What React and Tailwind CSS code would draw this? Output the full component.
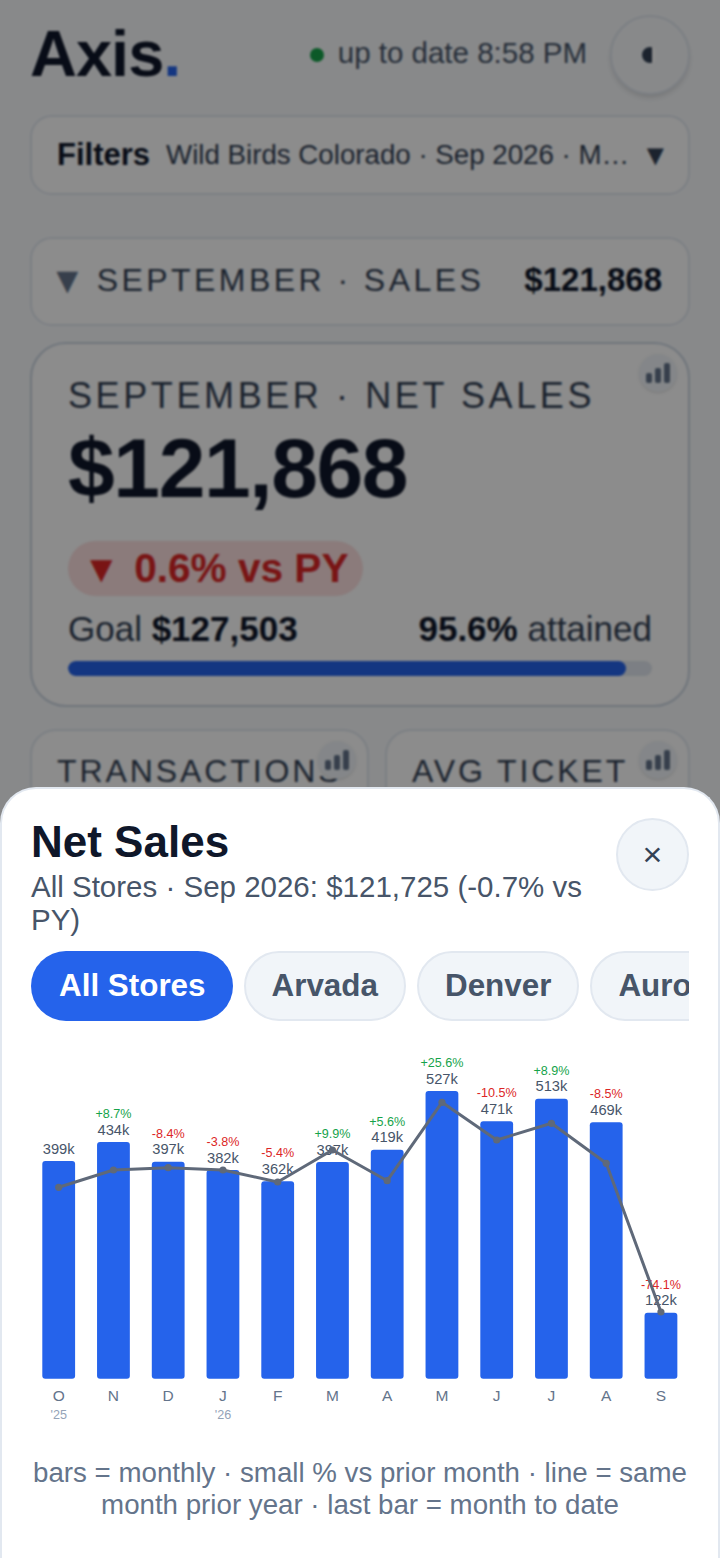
import React from 'react';

const months = [
    { m: 'O', v: '399k', top: 1161, line: 1187.3, year: "'25" },
    { m: 'N', v: '434k', top: 1142, line: 1170, pct: '+8.7%' },
    { m: 'D', v: '397k', top: 1161.7, line: 1167.7, pct: '-8.4%' },
    { m: 'J', v: '382k', top: 1170, line: 1170, pct: '-3.8%', year: "'26" },
    { m: 'F', v: '362k', top: 1181.3, line: 1182, pct: '-5.4%' },
    { m: 'M', v: '397k', top: 1162, line: 1150, pct: '+9.9%' },
    { m: 'A', v: '419k', top: 1149.7, line: 1180.7, pct: '+5.6%' },
    { m: 'M', v: '527k', top: 1091, line: 1102.3, pct: '+25.6%' },
    { m: 'J', v: '471k', top: 1121.3, line: 1140, pct: '-10.5%' },
    { m: 'J', v: '513k', top: 1098.7, line: 1123.3, pct: '+8.9%' },
    { m: 'A', v: '469k', top: 1122.3, line: 1163.3, pct: '-8.5%' },
    { m: 'S', v: '122k', top: 1312.7, line: 1312, pct: '-74.1%' },
];

const stores = ['All Stores', 'Arvada', 'Denver', 'Aurora'];

function ChartBadge() {
    return (
        <div className="absolute right-[11px] top-[10px] flex h-[38px] w-[38px] items-center justify-center rounded-full bg-[#f1f5f9] shadow-sm">
            <svg width="26" height="22" viewBox="0 0 26 22">
                <rect x="1" y="11" width="6" height="10" rx="2" fill="#64748b" />
                <rect x="10" y="6" width="6" height="15" rx="2" fill="#64748b" />
                <rect x="19" y="1" width="6" height="20" rx="2" fill="#64748b" />
            </svg>
        </div>
    );
}

function BarChart() {
    const cx = (i) => 58.7 + 54.75 * i;
    const points = months.map((d, i) => `${cx(i)},${d.line}`).join(' ');
    return (
        <svg className="mt-[29px] block h-[380px] w-[658px]" viewBox="31 1050 658 380">
            {months.map((d, i) => (
                <g key={i} textAnchor="middle">
                    <rect x={cx(i) - 16.4} y={d.top} width="32.8" height={1378.7 - d.top} rx="3" fill="#2563eb" />
                    <text x={cx(i)} y={d.top - 7.5} fontSize="14.7" fill="#475569">{d.v}</text>
                    {d.pct && (
                        <text x={cx(i)} y={d.top - 24} fontSize="12.6" fill={d.pct[0] === '+' ? '#16a34a' : '#dc2626'}>{d.pct}</text>
                    )}
                    <text x={cx(i)} y="1401" fontSize="15.5" fill="#64748b">{d.m}</text>
                    {d.year && <text x={cx(i)} y="1419" fontSize="12.6" fill="#94a3b8">{d.year}</text>}
                </g>
            ))}
            <polyline points={points} fill="none" stroke="#5f6979" strokeWidth="3" strokeLinejoin="round" />
            {months.map((d, i) => (
                <circle key={i} cx={cx(i)} cy={d.line} r="3.6" fill="#5f6979" />
            ))}
        </svg>
    );
}

function App() {
    return (
        <div className="relative h-[1558px] w-[720px] overflow-hidden bg-[#f8fafc] px-[30px] font-['Liberation_Sans',Arial,sans-serif] text-[#0f172a]">
            {/* page behind the sheet */}
            <header className="mt-[15px] flex h-[80px] items-center justify-between">
                <h1 className="pb-[4px] text-[65px] font-bold leading-none tracking-[-1px]">
                    Axis<span className="text-[#2563eb]">.</span>
                </h1>
                <div className="flex items-center">
                    <span className="mr-[14px] h-[14px] w-[14px] rounded-full bg-[#16a34a]" />
                    <span className="pb-[4px] text-[29.5px] text-[#475569]">up to date 8:58 PM</span>
                    <button className="ml-[23px] flex h-[80px] w-[80px] items-center justify-center rounded-full border-2 border-[#e2e8f0] bg-[#f8fafc] shadow-md">
                        <span className="mr-[2px] h-[16px] w-[14px] overflow-hidden">
                            <span className="block h-[16px] w-[16px] rounded-full bg-[linear-gradient(90deg,#334155_60%,#ffffff_60%)]" />
                        </span>
                    </button>
                </div>
            </header>

            <div className="mt-[20px] flex h-[80px] items-center rounded-[22px] border-2 border-[#e2e8f0] bg-white pl-[25px] pr-[14px]">
                <span className="text-[31px] font-bold">Filters</span>
                <span className="ml-[16px] w-[465px] truncate text-[27.7px] text-[#334155]">Wild Birds Colorado · Sep 2026 · Month to date</span>
                <span className="ml-[10px] shrink-0 text-[29px] leading-none text-[#334155]">▼</span>
            </div>

            <div className="mt-[42px] flex h-[89px] items-center justify-between rounded-[22px] border-2 border-[#e2e8f0] bg-white pb-[3px] pl-[17px] pr-[26px]">
                <div className="flex items-center">
                    <span className="text-[37px] leading-none text-[#64748b]">▼</span>
                    <span className="ml-[11px] text-[32px] tracking-[3.45px] text-[#334155]">SEPTEMBER · SALES</span>
                </div>
                <span className="text-[33px] font-bold">$121,868</span>
            </div>

            <section className="relative mt-[16px] h-[365px] rounded-[36px] border-2 border-[#cbd5e1] bg-white px-[36px] pt-[31px]">
                <ChartBadge />
                <div className="text-[36px] leading-[42px] tracking-[3.6px] text-[#334155]">SEPTEMBER · NET SALES</div>
                <div className="mt-[5px] text-[84px] font-bold leading-[92px] tracking-[-1.4px]">$121,868</div>
                <div className="mt-[27px] flex h-[55px] w-[295px] items-center justify-center rounded-full bg-[#fde0e0] text-[40.6px] font-bold text-[#dc2626]">
                    <span className="mr-[14px] text-[38px] leading-none">▼</span>0.6% vs PY
                </div>
                <div className="mt-[13px] flex justify-between text-[35px] leading-[40px] text-[#334155]">
                    <span>Goal <b className="text-[#0f172a]">$127,503</b></span>
                    <span><b className="text-[#0f172a]">95.6%</b> attained</span>
                </div>
                <div className="mt-[12px] h-[15px] overflow-hidden rounded-full bg-[#e2e8f0]">
                    <div className="h-full w-[95.6%] rounded-full bg-[#2563eb]" />
                </div>
            </section>

            <div className="mt-[22px] flex gap-[16px]">
                <div className="relative h-[200px] w-[339px] rounded-[26px] border-2 border-[#e2e8f0] bg-white pl-[25px] pt-[16px]">
                    <div className="text-[32px] tracking-[2.9px] text-[#334155]">TRANSACTIONS</div>
                    <ChartBadge />
                </div>
                <div className="relative h-[200px] flex-1 rounded-[26px] border-2 border-[#e2e8f0] bg-white pl-[25px] pt-[16px]">
                    <div className="text-[32px] tracking-[2.9px] text-[#334155]">AVG TICKET</div>
                    <ChartBadge />
                </div>
            </div>

            {/* dim layer */}
            <div className="absolute inset-0 bg-black/45 backdrop-blur-[1px]" />

            {/* bottom sheet */}
            <div className="absolute inset-x-0 bottom-0 h-[771px] rounded-t-[36px] border-2 border-b-0 border-[#e2e8f0] bg-white px-[29px] pt-[28px]">
                <div className="flex items-start justify-between">
                    <div className="w-[570px]">
                        <h2 className="text-[44px] font-bold leading-[50px]">Net Sales</h2>
                        <p className="mt-[3px] text-[29.5px] leading-[33px] text-[#475569]">All Stores · Sep 2026: $121,725 (-0.7% vs PY)</p>
                    </div>
                    <button className="mt-[1px] flex h-[73px] w-[73px] items-center justify-center rounded-full border-2 border-[#e2e8f0] bg-[#f1f5f9] text-[34px] text-[#334155]">×</button>
                </div>
                <div className="mt-[15px] flex w-[658px] gap-[11px] overflow-hidden">
                    {stores.map((s, i) => (
                        <div
                            key={s}
                            className={i === 0
                                ? 'flex h-[70px] shrink-0 items-center rounded-full bg-[#2563eb] pl-[28px] pr-[27px] text-[31.4px] font-bold text-white'
                                : 'flex h-[70px] shrink-0 items-center rounded-full border-2 border-[#e2e8f0] bg-[#f1f5f9] px-[26px] text-[31.4px] font-bold text-[#475569]'}
                        >
                            {s}
                        </div>
                    ))}
                </div>
                <BarChart />
                <p className="mt-[27px] text-center text-[27.7px] leading-[32px] text-[#64748b]">bars = monthly · small % vs prior month · line = same month prior year · last bar = month to date</p>
            </div>
        </div>
    );
}

export default App;
